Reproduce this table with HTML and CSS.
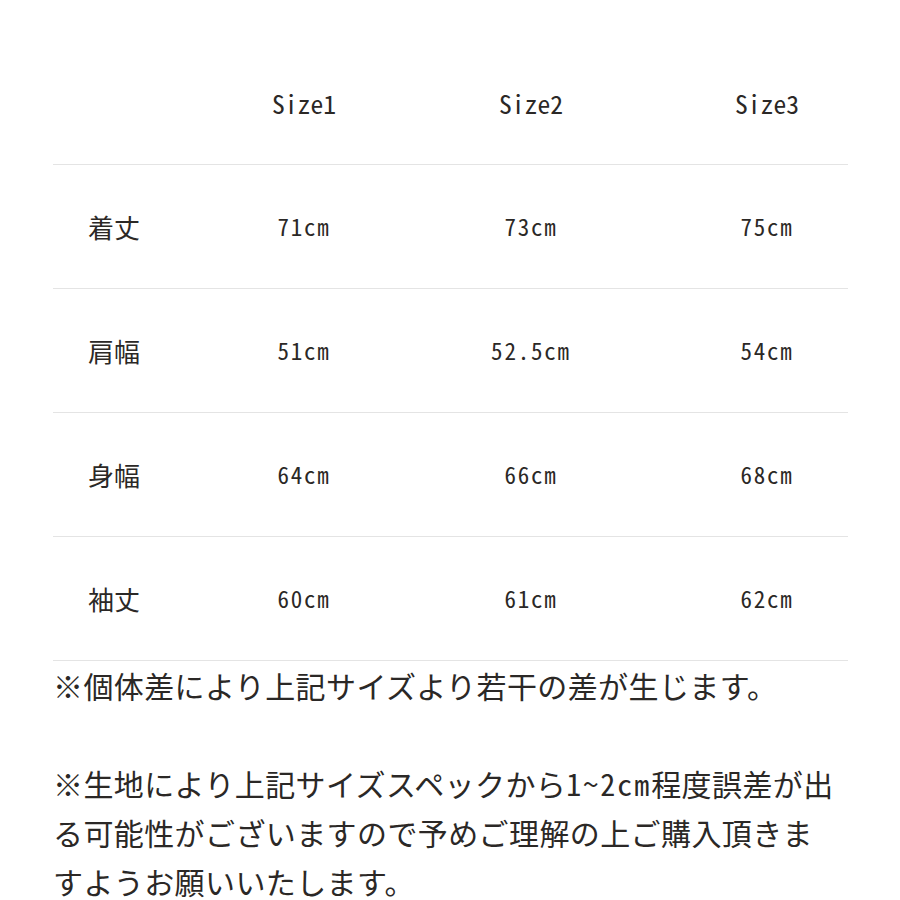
FILE: index.html
```html
<!DOCTYPE html>
<html lang="ja">
<head>
<meta charset="utf-8">
<title>サイズ表</title>
<link rel="stylesheet" href="styles.css">
</head>
<body>
<div class="page">
  <div class="table">
    <div class="row head">
      <div class="cell label"></div>
      <div class="cell c1">Size1</div>
      <div class="cell c2">Size2</div>
      <div class="cell c3">Size3</div>
    </div>
    <div class="row">
      <div class="cell label">着丈</div>
      <div class="cell c1">71cm</div>
      <div class="cell c2">73cm</div>
      <div class="cell c3">75cm</div>
    </div>
    <div class="row">
      <div class="cell label">肩幅</div>
      <div class="cell c1">51cm</div>
      <div class="cell c2">52.5cm</div>
      <div class="cell c3">54cm</div>
    </div>
    <div class="row">
      <div class="cell label">身幅</div>
      <div class="cell c1">64cm</div>
      <div class="cell c2">66cm</div>
      <div class="cell c3">68cm</div>
    </div>
    <div class="row">
      <div class="cell label">袖丈</div>
      <div class="cell c1">60cm</div>
      <div class="cell c2">61cm</div>
      <div class="cell c3">62cm</div>
    </div>
  </div>
  <div class="notes">
    <p>※個体差により上記サイズより若干の差が生じます。</p>
    <p class="gap">※生地により上記サイズスペックから<span class="hw">1~2cm</span>程度誤差が出る可能性がございますので予めご理解の上ご購入頂きますようお願いいたします。</p>
  </div>
</div>
</body>
</html>
```

FILE: styles.css
```css
html, body {
  margin: 0;
  padding: 0;
  background: #ffffff;
}
body {
  font-family: "Noto Sans CJK JP", "Noto Sans", sans-serif;
  color: #2b2826;
}
.page {
  width: 795px;
  margin: 0 auto 0 53px;
  padding-top: 41px;
}
.table {
  display: flex;
  flex-direction: column;
}
.row {
  display: flex;
  height: 123px;
  align-items: center;
  border-bottom: 1.5px solid #e4e4e4;
}
.cell {
  text-align: center;
  font-feature-settings: "hwid" 1;
  font-size: 23px;
  letter-spacing: 1.8px;
  line-height: 1;
}
.head .cell {
  font-size: 25.6px;
  letter-spacing: 0;
}
.label {
  width: 122px;
  font-size: 26px;
  letter-spacing: 0;
  font-feature-settings: normal;
}
.c1 { width: 258px; }
.c2 { width: 196px; }
.c3 { width: 162px; padding-left: 57px; }
.notes {
  font-size: 30px;
  letter-spacing: 0.4px;
  line-height: 49px;
  width: 786px;
}
.notes p {
  margin: 0;
}
.notes .gap {
  margin-top: 49px;
}
.hw {
  font-feature-settings: "hwid" 1;
  letter-spacing: 2px;
}
```
